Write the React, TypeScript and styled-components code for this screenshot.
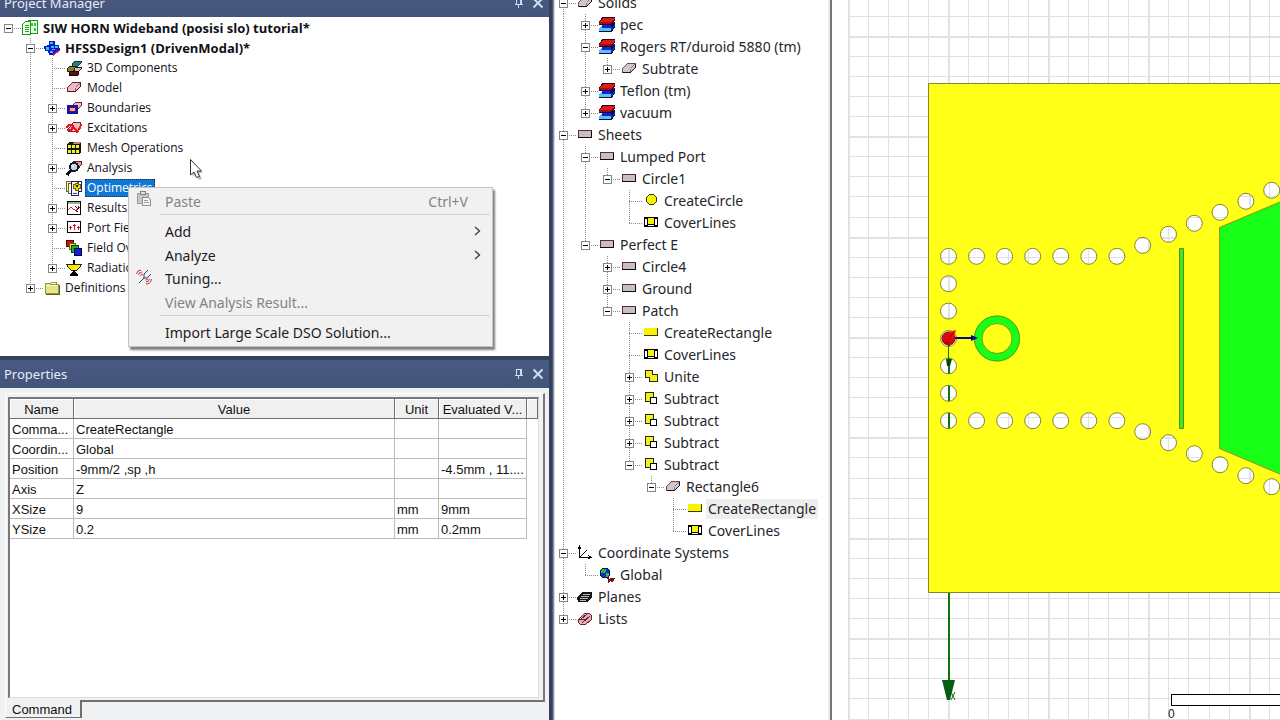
import React from "react";
import styled, { createGlobalStyle, css } from "styled-components";

const GlobalStyle = createGlobalStyle`
  *, *::before, *::after { box-sizing: border-box; }
  html, body, #root { height: 100%; margin: 0; }
  body { overflow: hidden; background: #fff; font-family: "Noto Sans", "Open Sans", sans-serif; color: #1a1a1a; }
  button { font: inherit; color: inherit; border: 0; background: none; padding: 0; margin: 0; }
  ul { list-style: none; margin: 0; padding: 0; }
`;

/* ---------- icons ---------- */

const Icon16 = styled.svg.attrs({ viewBox: "0 0 16 16", width: 16, height: 16, shapeRendering: "crispEdges" as const, "aria-hidden": true })`
  display: block;
  flex: none;
`;

const Slab = ({ fill, line, edge }: { fill: string; line: string; edge: string }) => (
  <>
    <path d="M1.500 7.500L6.500 2.500H14.500V6.500L9.500 11.500H1.500Z" fill={fill} stroke={line} />
    <path d="M9.500 11V7.500M10 7L14 3" fill="none" stroke={line} opacity="0.600" />
    <path d="M1.500 11.500H9.500L14.500 6.500V3" fill="none" stroke={edge} />
  </>
);

const icons: Record<string, React.ReactNode> = {
  project: (
    <>
      <path d="M6.500 .5H15.500V13.500H6.500Z" fill="#e9ffe9" stroke="#1c9a1c" />
      <path d="M9 3H11V6H9ZM12 3H14V6H12ZM12 8H14V11H12Z" fill="#22d822" />
      <path d="M.5 4.500L3.500 1.500H8.500V14.500H.5Z" fill="#f4fff4" stroke="#1c9a1c" />
      <path d="M3 5.500H7M3 7.500H7M3 9.500H7M3 11.500H7" stroke="#22a822" />
    </>
  ),
  design: (
    <>
      <path d="M7 13L14 8L16 11L9 16Z" fill="#e01848" />
      <path d="M5 1H11V5H15L16 10L12 11L9 15H5L4 11H1L0 6L5 5Z" fill="#0818c8" />
      <path d="M6 2H9V4H6ZM2 7H5V10H2ZM7 6H10V8H7ZM11 6H14V8H11ZM6 11H9V13H6ZM8 9H11V10H8Z" fill="#28c8ff" />
    </>
  ),
  comp3d: (
    <>
      <path d="M6 4L9 1H15V3L12 6H6Z" fill="#2f7f78" stroke="#103838" />
      <path d="M1 9L4 6H9V10L7 11H1Z" fill="#8a8420" stroke="#282400" />
      <path d="M8 9L10 7H15V9L13 11H8Z" fill="#c9c1c1" stroke="#301818" />
      <path d="M3 13L5 11H13L12 15H3Z" fill="#5a1010" stroke="#200" />
    </>
  ),
  model: <Slab fill="#e8bcc0" line="#7a2034" edge="#5a1020" />,
  boundary: (
    <>
      <path d="M7 5L10 2H15V6L12 9Z" fill="#e8bcc0" stroke="#7a2034" />
      <path d="M1 5H12V14H1Z" fill="#0c14b8" />
      <path d="M3.500 7.500H9.500V11.500H3.500Z" fill="#e8a8ac" stroke="#701030" />
    </>
  ),
  excitation: (
    <>
      <path d="M2.500 8.500L7.500 2.500H14.500V7.500L10.500 11.500H2.500Z" fill="#e8bcc0" stroke="#7a2034" />
      <path d="M0 8L3 5H6L9 9L11 12L14 8L15 4M1 10H5L7 7" fill="none" stroke="#ee1414" strokeWidth="2" />
    </>
  ),
  mesh: (
    <>
      <path d="M1 5L3 2H15V12L13 14H1Z" fill="#181800" />
      <path d="M8 2H15L14 4H7Z" fill="#c08080" />
      <path d="M2 5H5V8H2ZM6 5H9V8H6ZM10 5H13V8H10ZM2 10H5V13H2ZM6 10H9V13H6ZM10 10H13V13H10Z" fill="#f0ec40" />
    </>
  ),
  analysis: (
    <>
      <path d="M5 4L8 1H15V5L12 9Z" fill="#d8a0a4" stroke="#601828" />
      <path d="M1 15L6 9" stroke="#101010" strokeWidth="3" />
      <circle cx="8" cy="7" r="4" fill="#b8dcec" stroke="#181820" strokeWidth="2" />
      <path d="M6 6H8V7H6Z" fill="#fff" />
    </>
  ),
  optimetrics: (
    <>
      <path d="M.5 1.500H8.500V11.500H.5Z" fill="#f8f6b8" stroke="#6a6820" />
      <path d="M2.500 3.500H10.500V13.500H2.500Z" fill="#fff" stroke="#6a6820" />
      <path d="M5.500 1.500H15.500V11.500H12.500V15.500H5.500Z" fill="#fff" stroke="#202060" />
      <path d="M9 3H11V2H12V4H14V8H12V10H9V8H7V4H9Z" fill="#e4dc18" stroke="#6a6600" />
      <path d="M10 5H12V7H10Z" fill="#181800" />
      <path d="M7 13.500H11" stroke="#2040a0" />
    </>
  ),
  results: (
    <>
      <path d="M1.500 1.500H14.500V14.500H1.500Z" fill="#fff" stroke="#000" />
      <path d="M2 2H14V4H2Z" fill="#8cb88c" />
      <path d="M2 9.500L5 7.500L8 9.500L10 10.500L14 7.500" fill="none" stroke="#d01c30" />
      <path d="M9 6L12 9L13 6M10 11H12" fill="none" stroke="#401010" />
    </>
  ),
  port: (
    <>
      <path d="M1.500 1.500H14.500V12.500H1.500Z" fill="#fff" stroke="#000" />
      <path d="M4.500 10V6M8.500 10V4M12.500 10V6M3 7.500H6M7 5.500H10M11 7.500H14" stroke="#d01828" />
    </>
  ),
  field: (
    <>
      <path d="M.5 .5H7.500V6.500H.5Z" fill="#c81414" stroke="#500" />
      <path d="M3.500 3.500H9.500V9.500H3.500Z" fill="#e8e020" stroke="#660" />
      <path d="M5.500 5.500H12.500V12.500H5.500Z" fill="#18b428" stroke="#042" />
      <path d="M8.500 8.500H15.500V15.500H8.500Z" fill="#1020d8" stroke="#004" />
    </>
  ),
  radiation: (
    <>
      <path d="M7 0H9V4H7Z" fill="#000" />
      <path d="M.5 4.500H15.500L13.500 7.500L10.500 10.500H5.500L2.500 7.500Z" fill="#f4f000" stroke="#282800" />
      <path d="M7 10H9V12L12 14V16H4V14L7 12Z" fill="#000" />
    </>
  ),
  folder: (
    <>
      <path d="M1.500 3.500H5.500L7.500 4.500H14.500V13.500H1.500Z" fill="#e8e488" stroke="#98943c" />
      <path d="M7 2.500H12.500V4" fill="none" stroke="#98943c" />
      <path d="M2 5.500H14" stroke="#fffcd0" />
      <path d="M2 14.500H15.500V5" fill="none" stroke="#5c5a28" />
    </>
  ),
  solid: <Slab fill="#cfc8ca" line="#7a4450" edge="#201418" />,
  material: (
    <>
      <path d="M0 11L3 9H14L12 14H0Z" fill="#58c0ff" />
      <path d="M12 11L16 8V10L12 14Z" fill="#0838a0" />
      <path d="M0 14.500H12L15.500 10.500" fill="none" stroke="#081030" />
      <path d="M3 7L5 5H16V7L12 11H3Z" fill="#1420e0" />
      <path d="M12 8L16 4V7L12 11Z" fill="#080878" />
      <path d="M0 5L4 1H16L12 5Z" fill="#e01818" />
      <path d="M0 5H12L16 1V3L12 7H0Z" fill="#a00c10" />
      <path d="M0 7.500H12L15.500 3.500M0 5L4 .5H16" fill="none" stroke="#280008" />
    </>
  ),
  sheet: (
    <>
      <path d="M1.500 3.500H14.500V10.500H1.500Z" fill="#c6c0c2" stroke="#6a2434" />
      <path d="M1 10.500H14.500V4" fill="none" stroke="#180a0c" />
    </>
  ),
  circle: <path d="M6.500 1.500H10.500L13.500 4.500V8.500L10.500 11.500H6.500L3.500 8.500V4.500Z" fill="#f8f400" stroke="#3c3a00" />,
  cover: (
    <>
      <path d="M1 2H15V12H1Z" fill="#000" />
      <path d="M2 4H4V10H2ZM12 4H14V10H12ZM5 10H11V11H5Z" fill="#fff" />
      <path d="M5 3H11V9H5Z" fill="#f8f400" />
    </>
  ),
  rect: (
    <>
      <path d="M1 3H14V10H1Z" fill="#f8f400" />
      <path d="M1 10.500H14.500V3" fill="none" stroke="#3c3a00" />
    </>
  ),
  unite: <path d="M2.500 1.500H9.500V5.500H14.500V12.500H6.500V8.500H2.500Z" fill="#f0f020" stroke="#2c2c00" />,
  subtract: (
    <>
      <path d="M2.500 1.500H10.500V10.500H2.500Z" fill="#f0f020" stroke="#2c2c00" />
      <path d="M7.500 6.500H13.500V12.500H7.500Z" fill="#fff" stroke="#000" />
    </>
  ),
  axes: (
    <>
      <path d="M2.500 1V12.500H13" fill="none" stroke="#000" />
      <path d="M3 12L10 5M1 4L2.500 1L4 4M11 10L14 12.500L11 14" fill="none" stroke="#000" />
    </>
  ),
  globe: (
    <>
      <circle cx="6" cy="6" r="5" fill="#1030c8" stroke="#041060" />
      <path d="M3 2H7V4L5 6H2V4ZM7 6H10V8L8 10H7Z" fill="#28b848" />
      <path d="M9 10L10 14L12 12L13 14L15 11" fill="none" stroke="#7c1018" strokeWidth="2" />
    </>
  ),
  planes: (
    <>
      <path d="M0 9L5 3H15V8L11 13H1Z" fill="#181818" />
      <path d="M6 5.500H13M4 7.500H12M3 9.500H11M3 11.500H9" stroke="#b8b8b8" />
    </>
  ),
  lists: (
    <>
      <path d="M1.500 8.500L7.500 2.500H12.500L14.500 4.500V8.500L8.500 13.500H3.500L1.500 11.500Z" fill="#dcb4b8" stroke="#702030" />
      <path d="M2 9L8 8M5 12L13 5M4 8L10 3" fill="none" stroke="#702030" />
    </>
  ),
};

const PinIcon = () => (
  <svg width="10" height="12" viewBox="0 0 10 12" shapeRendering="crispEdges" aria-hidden="true">
    <path d="M2.500 7V1.500H7.500V7M6.500 2V7M1 7.500H9M4.500 8V11" fill="none" stroke="#cfdcf2" />
  </svg>
);

const CrossIcon = () => (
  <svg width="12" height="12" viewBox="0 0 12 12" aria-hidden="true">
    <path d="M1.500 1.500L10.500 10.500M10.500 1.500L1.500 10.500" stroke="#cfdcf2" strokeWidth="2" />
  </svg>
);

/* ---------- tree ---------- */

type Node = { label: string; icon: string; bold?: boolean; mark?: "selected" | "hover"; children?: Node[]; collapsed?: boolean };

const Row = styled.div<{ $h: number }>`
  display: flex;
  align-items: center;
  height: ${(p) => p.$h}px;
`;

const dots = (dir: string) => `repeating-linear-gradient(${dir}, #8a8a8a 0 1px, transparent 1px 2px)`;

const Guide = styled.span<{ $line: "full" | "top" | "bottom" | "none"; $branch: boolean; $h: number }>`
  flex: none;
  align-self: stretch;
  width: 22px;
  padding: ${(p) => p.$h / 2 - 4}px 0 0 4px;
  ${(p) => {
    const layers: string[] = [];
    if (p.$line === "full") layers.push(`${dots("to bottom")} 8px 0 / 1px 100%`);
    if (p.$line === "top") layers.push(`${dots("to bottom")} 8px 0 / 1px 50%`);
    if (p.$line === "bottom") layers.push(`${dots("to bottom")} 8px 100% / 1px 50%`);
    if (p.$branch) layers.push(`${dots("to right")} 8px ${p.$h / 2}px / 13px 1px`);
    return layers.length ? css`background: ${layers.map((l) => l + " no-repeat").join(", ")};` : "";
  }}
`;

const Expander = styled.button<{ $plus: boolean }>`
  display: block;
  width: 9px;
  height: 9px;
  border: 1px solid #858585;
  background:
    linear-gradient(#000, #000) center / 5px 1px no-repeat,
    ${(p) => (p.$plus ? "linear-gradient(#000, #000) center / 1px 5px no-repeat," : "")}
    linear-gradient(#fff, #fff);
`;

const Label = styled.span<{ $bold?: boolean; $mark?: string }>`
  margin-left: 3px;
  padding: 0 2px;
  line-height: 18px;
  white-space: nowrap;
  ${(p) => p.$bold && css`font-size: 13px; font-weight: 700;`}
  ${(p) => p.$mark === "selected" && css`background: #0f78d4; color: #fff; outline: 1px dotted #203040; outline-offset: -1px;`}
  ${(p) => p.$mark === "hover" && css`background: #efeeee; line-height: 20px;`}
`;

const ProjectTreeList = styled.ul`
  padding-top: 1px;
  font-family: "Open Sans", "Noto Sans", sans-serif;
  font-size: 12px;
  color: #101018;
`;

const ModelTreeList = styled.ul`
  margin-top: -8px;
  font-size: 14px;
  color: #26262a;
`;

const TreeItems = ({ nodes, h, trail = [] }: { nodes: Node[]; h: number; trail?: boolean[] }) => (
  <>
    {nodes.map((n, i) => {
      const last = i === nodes.length - 1;
      const firstRoot = trail.length === 0 && i === 0;
      const line = firstRoot ? (last ? "none" : "bottom") : last ? "top" : "full";
      const hasBox = n.children || n.collapsed;
      return (
        <li key={i} role="treeitem" aria-expanded={hasBox ? !!n.children : undefined}>
          <Row $h={h}>
            {trail.map((more, k) => (
              <Guide key={k} $h={h} $line={more ? "full" : "none"} $branch={false} />
            ))}
            <Guide $h={h} $line={line} $branch>
              {hasBox && <Expander type="button" $plus={!n.children} aria-label={(n.children ? "Collapse " : "Expand ") + n.label} />}
            </Guide>
            <Icon16>{icons[n.icon]}</Icon16>
            <Label $bold={n.bold} $mark={n.mark}>{n.label}</Label>
          </Row>
          {n.children && (
            <ul role="group">
              <TreeItems nodes={n.children} h={h} trail={[...trail, !last]} />
            </ul>
          )}
        </li>
      );
    })}
  </>
);

const projectNodes: Node[] = [
  {
    label: "SIW HORN Wideband (posisi slo) tutorial*", icon: "project", bold: true,
    children: [
      {
        label: "HFSSDesign1 (DrivenModal)*", icon: "design", bold: true,
        children: [
          { label: "3D Components", icon: "comp3d" },
          { label: "Model", icon: "model" },
          { label: "Boundaries", icon: "boundary", collapsed: true },
          { label: "Excitations", icon: "excitation", collapsed: true },
          { label: "Mesh Operations", icon: "mesh" },
          { label: "Analysis", icon: "analysis", collapsed: true },
          { label: "Optimetrics", icon: "optimetrics", mark: "selected" },
          { label: "Results", icon: "results", collapsed: true },
          { label: "Port Field", icon: "port", collapsed: true },
          { label: "Field Overlays", icon: "field" },
          { label: "Radiation", icon: "radiation", collapsed: true },
        ],
      },
      { label: "Definitions", icon: "folder", collapsed: true },
    ],
  },
];

const modelNodes: Node[] = [
  {
    label: "Solids", icon: "solid",
    children: [
      { label: "pec", icon: "material", collapsed: true },
      { label: "Rogers RT/duroid 5880 (tm)", icon: "material", children: [{ label: "Subtrate", icon: "solid", collapsed: true }] },
      { label: "Teflon (tm)", icon: "material", collapsed: true },
      { label: "vacuum", icon: "material", collapsed: true },
    ],
  },
  {
    label: "Sheets", icon: "sheet",
    children: [
      {
        label: "Lumped Port", icon: "sheet",
        children: [
          { label: "Circle1", icon: "sheet", children: [{ label: "CreateCircle", icon: "circle" }, { label: "CoverLines", icon: "cover" }] },
        ],
      },
      {
        label: "Perfect E", icon: "sheet",
        children: [
          { label: "Circle4", icon: "sheet", collapsed: true },
          { label: "Ground", icon: "sheet", collapsed: true },
          {
            label: "Patch", icon: "sheet",
            children: [
              { label: "CreateRectangle", icon: "rect" },
              { label: "CoverLines", icon: "cover" },
              { label: "Unite", icon: "unite", collapsed: true },
              { label: "Subtract", icon: "subtract", collapsed: true },
              { label: "Subtract", icon: "subtract", collapsed: true },
              { label: "Subtract", icon: "subtract", collapsed: true },
              {
                label: "Subtract", icon: "subtract",
                children: [
                  {
                    label: "Rectangle6", icon: "solid",
                    children: [{ label: "CreateRectangle", icon: "rect", mark: "hover" }, { label: "CoverLines", icon: "cover" }],
                  },
                ],
              },
            ],
          },
        ],
      },
    ],
  },
  { label: "Coordinate Systems", icon: "axes", children: [{ label: "Global", icon: "globe" }] },
  { label: "Planes", icon: "planes", collapsed: true },
  { label: "Lists", icon: "lists", collapsed: true },
];

/* ---------- shell ---------- */

const Shell = styled.main`
  display: flex;
  height: 100vh;
  overflow: hidden;
`;

const DockColumn = styled.div`
  position: relative;
  display: flex;
  flex-direction: column;
  flex: 0 0 549px;
  background: #35425f;
`;

const Splitter = styled.div`
  flex: 0 0 6px;
  border-right: 1px solid #d8dade;
  background: linear-gradient(to right, #33405f 0 3px, #4a5878 3px 4px, #8a8e98 4px 5px);
`;

const Caption = styled.header`
  display: flex;
  align-items: center;
  flex: 0 0 28px;
  gap: 8px;
  padding: 0 5px 0 4px;
  background: linear-gradient(#4a5a82, #43547a);
  color: #e6ebf5;
`;

const TopCaption = styled(Caption)`
  margin-top: -11px;
`;

const CaptionTitle = styled.h2`
  flex: 1;
  margin: 0;
  font-size: 13px;
  font-weight: 400;
`;

const CaptionButton = styled.button`
  display: flex;
`;

const ProjectPane = styled.section`
  flex: 0 0 339px;
  margin-bottom: 4px;
  overflow: hidden;
  background: #fff;
`;

const PropertiesPane = styled.section`
  flex: 1;
  display: flex;
  flex-direction: column;
  align-items: flex-start;
  min-height: 0;
  padding: 5px 4px 2px 5px;
  background: #f0f1f2;
  font-family: "Liberation Sans", Arial, sans-serif;
  font-size: 13px;
`;

const TabFrame = styled.div`
  flex: 1;
  align-self: stretch;
  padding: 3px 4px 2px 2px;
  border: solid;
  border-width: 1px 2px 2px 1px;
  border-color: #fff #787878 #707070 #fff;
`;

const GridFrame = styled.div`
  height: 100%;
  border: solid;
  border-width: 2px 1px 1px 2px;
  border-color: #787878 #dcdcdc #dcdcdc #787878;
  background: #fff;
`;

const PropertyTable = styled.table`
  width: 100%;
  table-layout: fixed;
  border-collapse: separate;
  border-spacing: 0;
  color: #101010;
`;

const HeadCell = styled.th<{ $w?: number }>`
  width: ${(p) => (p.$w ? p.$w + "px" : "auto")};
  height: 20px;
  padding: 2px 2px 0;
  overflow: hidden;
  white-space: nowrap;
  font-weight: 400;
  background: #f0f0f0;
  border-right: 1px solid #707070;
  border-bottom: 1px solid #707070;
  box-shadow: inset 1px 1px #fff;
`;

const Cell = styled.td<{ $plain?: boolean }>`
  height: 20px;
  padding: 2px 2px 0;
  white-space: nowrap;
  overflow: hidden;
  border: solid #bcbcbc;
  border-width: ${(p) => (p.$plain ? "0" : "0 1px 1px 0")};
`;

const Tab = styled.button`
  position: relative;
  height: 18px;
  margin-top: -2px;
  padding: 1px 8px 0 6px;
  border: solid;
  border-width: 0 2px 1px 1px;
  border-color: transparent #707070 #707070 #fff;
  background: #f0f1f2;
  color: #101010;
`;

/* ---------- context menu ---------- */

const Menu = styled.div`
  position: absolute;
  left: 128px;
  top: 187px;
  width: 365px;
  padding: 1px 2px 2px;
  border: 1px solid #c4c4c4;
  background: #f1f1f1;
  box-shadow: 2px 3px 2px rgba(0, 0, 0, 0.5);
  font-size: 14px;
`;

const MenuItem = styled.button<{ $short?: boolean }>`
  display: flex;
  align-items: center;
  width: 100%;
  height: ${(p) => (p.$short ? 23 : 24)}px;
  padding-right: 9px;
  text-align: left;
  white-space: nowrap;
  color: #1c1c1c;
  &:disabled { color: #838383; }
`;

const MenuGlyph = styled.span`
  flex: 0 0 34px;
  padding-left: 5px;
`;

const MenuText = styled.span`
  flex: 1;
`;

const Shortcut = styled.span`
  margin-right: 13px;
`;

const MenuRule = styled.hr`
  height: 1px;
  margin: 1px 0 4px 29px;
  border: 0;
  background: #d2d2d2;
`;

const PasteIcon = () => (
  <svg width="16" height="16" viewBox="0 0 16 16" shapeRendering="crispEdges" aria-hidden="true">
    <path d="M1.500 2.500H12.500V12.500H1.500Z" fill="#c4c6c8" stroke="#989a9c" />
    <path d="M4.500 .5H9.500V3.500H4.500Z" fill="#e0e0e0" stroke="#808284" />
    <path d="M6.500 6.500H12.500L14.500 8.500V14.500H6.500Z" fill="#f6f6f6" stroke="#8c8e90" />
    <path d="M8 9.500H12M8 11.500H13" stroke="#9a9c9e" />
  </svg>
);

const TuningIcon = () => (
  <svg width="16" height="16" viewBox="0 0 16 16" aria-hidden="true">
    <path d="M3 14L8 9M8 9V5L12 1M8 9H11L15 5" fill="none" stroke="#283878" />
    <path d="M0.500 5Q1 1 5 1M2.500 6Q3 3 6 3M4.500 7Q5 5 7 5M15.500 10Q15 15 10 15M13.500 10Q13 13 10 13M12 9.500Q12 11 9.500 11" fill="none" stroke="#c83048" />
  </svg>
);

const Chevron = () => (
  <svg width="7" height="10" viewBox="0 0 7 10" aria-hidden="true">
    <path d="M1 1L5.500 5L1 9" fill="none" stroke="#3a3a3a" strokeWidth="1.300" />
  </svg>
);

const Pointer = styled.svg`
  position: absolute;
  left: 189px;
  top: 158px;
`;

/* ---------- middle and right panes ---------- */

const ModelPane = styled.section`
  flex: 0 0 277px;
  overflow: hidden;
  background: #fff;
  border-right: 2px solid #777;
  box-shadow: inset -2px 0 #ececec;
`;

const Canvas = styled.section`
  flex: 1;
  min-width: 0;
  background: #fff;
`;

const Drawing = styled.svg`
  display: block;
  width: 100%;
  height: 100%;
`;

const range = (a: number, b: number) => Array.from({ length: b - a + 1 }, (_, i) => a + i);

const vias: [number, number][] = [
  ...range(-3, 3).map((k): [number, number] => [0, k * 27.4]),
  ...range(1, 6).flatMap((k): [number, number][] => [[k * 28.06, -82.2], [k * 28.06, 82.2]]),
  ...range(1, 16).flatMap((k): [number, number][] => [
    [168.4 + k * 25.8, -82.2 - k * 11],
    [168.4 + k * 25.8, 82.2 + k * 11],
  ]),
];

const hole = (x: number, y: number, r = 8) => `M${x - r} ${y}a${r} ${r} 0 1 0 ${2 * r} 0a${r} ${r} 0 1 0 ${-2 * r} 0Z`;

const Scene = () => (
  <Drawing role="img" aria-label="Antenna layout, top view">
    <g transform="translate(117 338)">
      <g shapeRendering="crispEdges">
        {range(-5, 60).map((k) => {
          const major = k % 5 === 0;
          return <rect key={`v${k}`} x={Math.round(k * 20.04) - 1} y="-338" width={major ? 2 : 1} height="2000" fill={major ? "#e2e2e4" : "#e0e0e2"} />;
        })}
        {range(-16, 60).map((k) => {
          const major = k % 5 === 0;
          return <rect key={`h${k}`} x="-101" y={Math.round(k * 20.08) - 1} width="3000" height={major ? 2 : 1} fill={major ? "#e2e2e4" : "#e0e0e2"} />;
        })}
        <path d="M-1 0H1V350H-1Z" fill="#0a780a" />
      </g>
      <path
        d={"M-20.500 -254.500H900V254.500H-20.500Z" + vias.map(([x, y]) => hole(x - 0.5, y + 0.5)).join("")}
        fill="#ffff17"
        fillRule="evenodd"
        stroke="#86862a"
      />
      <path d="M270.500 -110.500L332 -136.500L900 -379V379L332 136.500L270.500 110.500Z" fill="#17ff17" stroke="#a08c20" />
      <path d="M230.500 -89.500H234.500V90.500H230.500Z" fill="#3cec1c" stroke="#5a8a18" />
      <circle cx="48" cy="0.500" r="19" fill="none" stroke="#17ff17" strokeWidth="8" />
      <circle cx="48" cy="0.500" r="22.500" fill="none" stroke="#5c9a18" />
      <circle cx="48" cy="0.500" r="15" fill="none" stroke="#7a9a18" />
      <path d="M-.5 4V22" stroke="#0a780a" />
      <path d="M-3 21H3L1 28H-2Z" fill="#064806" />
      <path d="M3 0H23" stroke="#08087c" strokeWidth="2" />
      <path d="M22 -3L29 0L22 3Z" fill="#08087c" />
      <circle cx="-0.500" cy="0.500" r="6.500" fill="#dc0808" stroke="#8a1010" />
      <path d="M0 -6L7 -8L4 2Z" fill="#f01010" />
      <path d="M1 -1L4 -5M-4 4L0 5" stroke="#780404" />
      <path d="M-7 342H6L1 362H-2Z" fill="#065c10" />
      <path d="M2 354L6 362M6 354L2 362" stroke="#0a780a" />
    </g>
    <svg y="100%" overflow="visible">
      <path d="M339.500 -25.500H800V-14.500H339.500Z" fill="#fff" stroke="#000" shapeRendering="crispEdges" />
      <text x="336" y="-2" fontFamily="Liberation Sans, Arial, sans-serif" fontSize="12" fill="#202020">0</text>
    </svg>
  </Drawing>
);

const properties = [
  ["Comma...", "CreateRectangle", "", ""],
  ["Coordin...", "Global", "", ""],
  ["Position", "-9mm/2 ,sp ,h", "", "-4.5mm , 11...."],
  ["Axis", "Z", "", ""],
  ["XSize", "9", "mm", "9mm"],
  ["YSize", "0.2", "mm", "0.2mm"],
];

const CaptionActions = () => (
  <>
    <CaptionButton type="button" aria-label="Auto hide"><PinIcon /></CaptionButton>
    <CaptionButton type="button" aria-label="Close"><CrossIcon /></CaptionButton>
  </>
);

export default function App() {
  return (
    <>
      <GlobalStyle />
      <Shell>
        <DockColumn>
          <TopCaption>
            <CaptionTitle>Project Manager</CaptionTitle>
            <CaptionActions />
          </TopCaption>
          <ProjectPane>
            <ProjectTreeList role="tree">
              <TreeItems nodes={projectNodes} h={20} />
            </ProjectTreeList>
          </ProjectPane>
          <Caption>
            <CaptionTitle>Properties</CaptionTitle>
            <CaptionActions />
          </Caption>
          <PropertiesPane>
            <TabFrame>
              <GridFrame>
                <PropertyTable>
                  <thead>
                    <tr>
                      <HeadCell $w={64}>Name</HeadCell>
                      <HeadCell>Value</HeadCell>
                      <HeadCell $w={44}>Unit</HeadCell>
                      <HeadCell $w={88}>Evaluated V...</HeadCell>
                      <HeadCell $w={11} aria-label="More" />
                    </tr>
                  </thead>
                  <tbody>
                    {properties.map((row) => (
                      <tr key={row[0]}>
                        {row.map((value, i) => (
                          <Cell key={i}>{value}</Cell>
                        ))}
                        <Cell $plain />
                      </tr>
                    ))}
                  </tbody>
                </PropertyTable>
              </GridFrame>
            </TabFrame>
            <Tab type="button" role="tab" aria-selected="true">Command</Tab>
          </PropertiesPane>
          <Menu role="menu">
            <MenuItem role="menuitem" disabled>
              <MenuGlyph><PasteIcon /></MenuGlyph>
              <MenuText>Paste</MenuText>
              <Shortcut>Ctrl+V</Shortcut>
            </MenuItem>
            <MenuRule />
            <MenuItem role="menuitem"><MenuGlyph /><MenuText>Add</MenuText><Chevron /></MenuItem>
            <MenuItem role="menuitem"><MenuGlyph /><MenuText>Analyze</MenuText><Chevron /></MenuItem>
            <MenuItem role="menuitem" $short><MenuGlyph><TuningIcon /></MenuGlyph><MenuText>Tuning...</MenuText></MenuItem>
            <MenuItem role="menuitem" disabled><MenuGlyph /><MenuText>View Analysis Result...</MenuText></MenuItem>
            <MenuRule />
            <MenuItem role="menuitem"><MenuGlyph /><MenuText>Import Large Scale DSO Solution...</MenuText></MenuItem>
          </Menu>
          <Pointer width="16" height="24" viewBox="0 0 16 24" aria-hidden="true">
            <path d="M3.500 3.500V19L7 16L10 22L13 21L10 15H14Z" fill="#000" opacity="0.250" />
            <path d="M1.500 1.500V17L5 14L7.500 19.500L10.500 18.500L8 13H12.500Z" fill="#fff" stroke="#333" />
          </Pointer>
        </DockColumn>
        <Splitter />
        <ModelPane>
          <ModelTreeList role="tree">
            <TreeItems nodes={modelNodes} h={22} />
          </ModelTreeList>
        </ModelPane>
        <Canvas>
          <Scene />
        </Canvas>
      </Shell>
    </>
  );
}
